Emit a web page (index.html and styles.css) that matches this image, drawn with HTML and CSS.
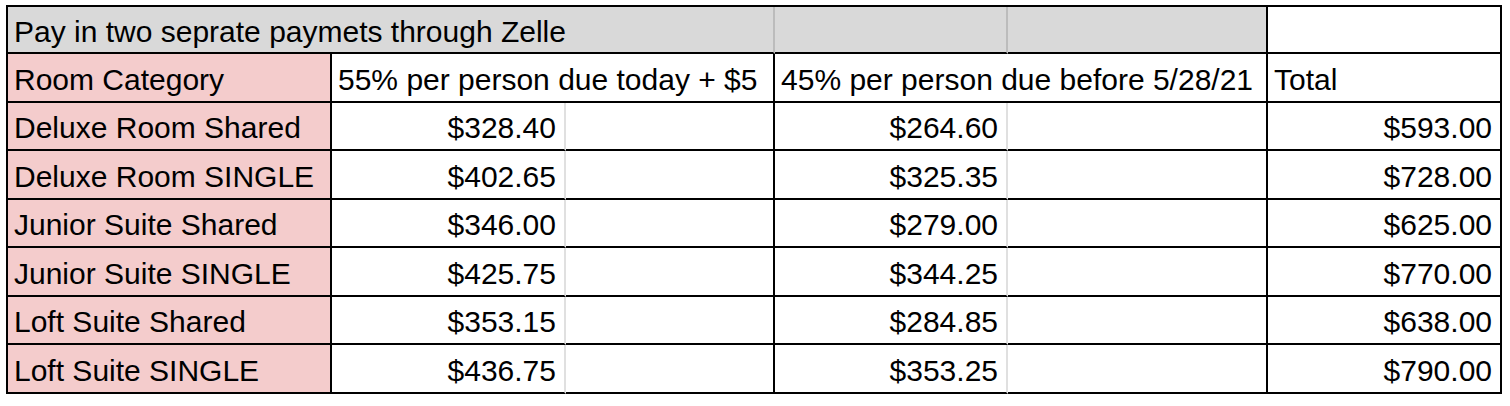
FILE: index.html
```html
<!DOCTYPE html>
<html lang="en">
<head>
<meta charset="utf-8">
<title>Room payments</title>
<link rel="stylesheet" href="styles.css">
</head>
<body>
<table class="sheet">
  <colgroup>
    <col class="col-a">
    <col class="col-b">
    <col class="col-c">
    <col class="col-d">
    <col class="col-e">
    <col class="col-f">
  </colgroup>
  <tbody>
    <tr class="r-title">
      <td colspan="3" class="gray soft">Pay in two seprate paymets through Zelle</td>
      <td class="gray soft"></td>
      <td class="gray"></td>
      <td></td>
    </tr>
    <tr class="r-odd">
      <td class="pink">Room Category</td>
      <td colspan="2">55% per person due today + $5</td>
      <td colspan="2">45% per person due before 5/28/21</td>
      <td>Total</td>
    </tr>
    <tr class="r-even">
      <td class="pink">Deluxe Room Shared</td>
      <td class="num faint">$328.40</td><td></td>
      <td class="num faint">$264.60</td><td></td>
      <td class="num">$593.00</td>
    </tr>
    <tr class="r-odd">
      <td class="pink">Deluxe Room SINGLE</td>
      <td class="num faint">$402.65</td><td></td>
      <td class="num faint">$325.35</td><td></td>
      <td class="num">$728.00</td>
    </tr>
    <tr class="r-even">
      <td class="pink">Junior Suite Shared</td>
      <td class="num faint">$346.00</td><td></td>
      <td class="num faint">$279.00</td><td></td>
      <td class="num">$625.00</td>
    </tr>
    <tr class="r-odd">
      <td class="pink">Junior Suite SINGLE</td>
      <td class="num faint">$425.75</td><td></td>
      <td class="num faint">$344.25</td><td></td>
      <td class="num">$770.00</td>
    </tr>
    <tr class="r-even">
      <td class="pink">Loft Suite Shared</td>
      <td class="num faint">$353.15</td><td></td>
      <td class="num faint">$284.85</td><td></td>
      <td class="num">$638.00</td>
    </tr>
    <tr class="r-odd">
      <td class="pink">Loft Suite SINGLE</td>
      <td class="num faint">$436.75</td><td></td>
      <td class="num faint">$353.25</td><td></td>
      <td class="num">$790.00</td>
    </tr>
  </tbody>
</table>
</body>
</html>
```

FILE: styles.css
```css
html, body {
  margin: 0;
  padding: 0;
  background: #ffffff;
}

.sheet {
  margin: 5px 0 0 6px;
  width: 1496px;
  table-layout: fixed;
  border-collapse: separate;
  border-spacing: 0;
  border-top: 2px solid #000;
  border-left: 2px solid #000;
  font-family: "Liberation Sans", Arial, sans-serif;
  font-size: 30px;
  color: #000;
}

.col-a { width: 324px; }
.col-b { width: 234px; }
.col-c { width: 209px; }
.col-d { width: 233px; }
.col-e { width: 260px; }
.col-f { width: 234px; }

.sheet td {
  padding: 4px 8px 0 6px;
  border-right: 2px solid #000;
  border-bottom: 2px solid #000;
  vertical-align: middle;
  white-space: nowrap;
  overflow: hidden;
  line-height: 34px;
}

.r-title { height: 47px; }
.r-odd { height: 49px; }
.r-even { height: 48px; }

.sheet td.gray { background: #d9d9d9; }
.sheet td.pink { background: #f4cccc; }
.sheet td.soft { border-right-color: #bcbcbc; }
.sheet td.faint { border-right-color: #e0e0e0; }
.sheet td.num { text-align: right; }
```
